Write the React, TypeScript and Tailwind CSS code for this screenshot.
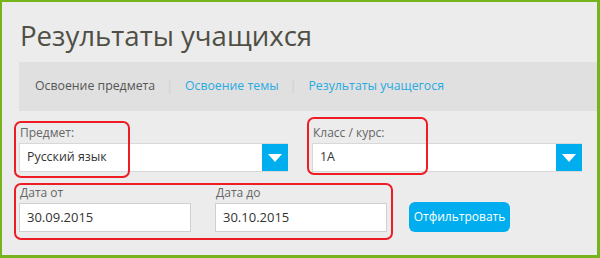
import React from "react";

function Arrow() {
  return (
    <div className="w-[26px] h-full bg-[#00aeef] flex items-center justify-center">
      <svg width="14" height="8" viewBox="0 0 14 8">
        <polygon points="0,0 14,0 7,8" fill="#ffffff" />
      </svg>
    </div>
  );
}

function Select({ label, value }: { label: string; value: string }) {
  return (
    <div className="flex flex-col">
      <div className="text-[12px] leading-[16px] text-[#666] pl-[1px] h-[18px] pt-[14px] box-content">{label}</div>
      <div className="h-[29px] flex bg-white border border-[#d8d8d8] border-r-0">
        <div className="flex-1 flex items-center pl-[7px] text-[12.4px] text-[#333]">{value}</div>
        <Arrow />
      </div>
    </div>
  );
}

function DateInput({ label, value }: { label: string; value: string }) {
  return (
    <div className="flex flex-col w-[172px]">
      <div className="text-[12px] leading-[16px] text-[#666] pl-[1px] h-[18px] pt-[13px] box-content">{label}</div>
      <div className="h-[29px] flex items-center bg-white border border-[#d0d0d0] pl-[7px] text-[13px] text-[#333]">{value}</div>
    </div>
  );
}

export default function App() {
  return (
    <div
      className="relative w-[600px] h-[258px] bg-[#ececec] border-l-2 border-t-2 border-r-[3px] border-b-[3px] border-[#76b41c] overflow-hidden"
      style={{ fontFamily: '"Open Sans", "Noto Sans", sans-serif' }}
    >
      <div className="pl-[17px] pt-[14px]">
        <h1 className="text-[27.6px] leading-[38px] text-[#4f4f45] font-normal m-0 pl-[1px]">Результаты учащихся</h1>
        <div className="mt-[8px] h-[49px] bg-[#e0e0e0] flex items-center pl-[16px] text-[12.3px]">
          <span className="text-[#555]">Освоение предмета</span>
          <span className="text-[#cfcfcf] ml-[11px] mr-[12px]">|</span>
          <span className="text-[#29abe2]">Освоение темы</span>
          <span className="text-[#cfcfcf] ml-[11px] mr-[12px]">|</span>
          <span className="text-[#29abe2]">Результаты учащегося</span>
        </div>
        <div className="grid grid-cols-[269px_270px] gap-x-[24px]">
          <Select label="Предмет:" value="Русский язык" />
          <Select label="Класс / курс:" value="1А" />
        </div>
        <div className="flex items-end">
          <DateInput label="Дата от" value="30.09.2015" />
          <div className="w-[24px]" />
          <DateInput label="Дата до" value="30.10.2015" />
          <button className="ml-[22px] w-[101px] h-[30px] rounded-[6px] bg-[#00aeef] text-white text-[12px] flex items-center justify-center">
            Отфильтровать
          </button>
        </div>
      </div>
      <div className="absolute left-[12px] top-[119px] w-[116px] h-[57px] border-2 border-[#ee1c24] rounded-[7px]" />
      <div className="absolute left-[305px] top-[115px] w-[121px] h-[58px] border-2 border-[#ee1c24] rounded-[7px]" />
      <div className="absolute left-[12px] top-[181px] w-[379px] h-[57px] border-2 border-[#ee1c24] rounded-[7px]" />
    </div>
  );
}
